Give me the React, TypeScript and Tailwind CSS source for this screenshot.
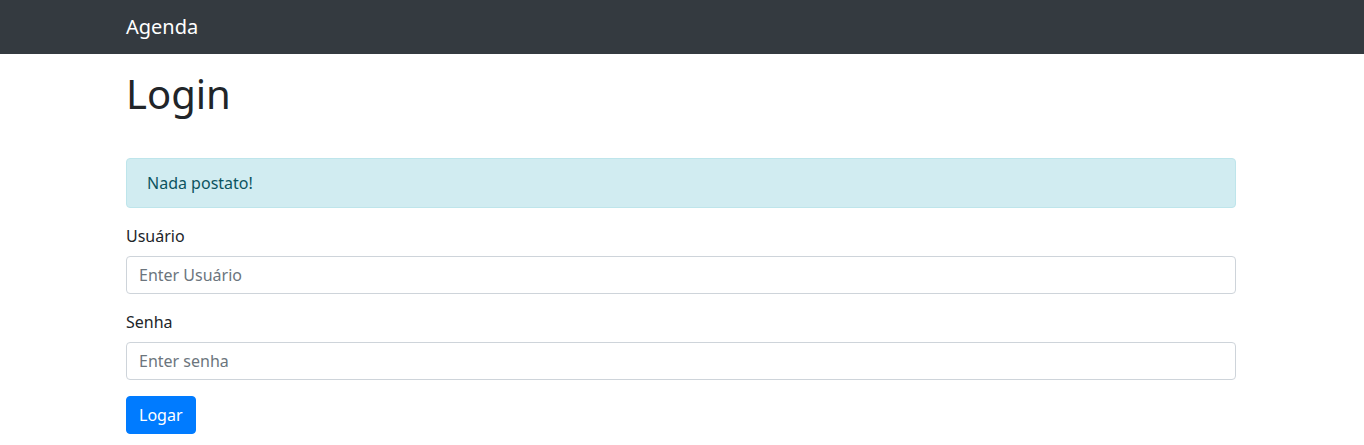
import { useState, FormEvent } from 'react'

export default function App() {
  const [usuario, setUsuario] = useState('')
  const [senha, setSenha] = useState('')

  const handleSubmit = (e: FormEvent) => {
    e.preventDefault()
  }

  return (
    <div className="min-h-screen bg-white text-[#212529] font-['Noto_Sans',sans-serif] text-base leading-6">
      <nav className="h-[54px] bg-[#343a40] flex justify-center pr-[2px]">
        <div className="w-[1110px] flex items-center">
          <a href="#" className="text-white text-xl leading-[30px]">
            Agenda
          </a>
        </div>
      </nav>

      <div className="flex justify-center pr-[2px]">
        <div className="w-[1110px]">
          <h1 className="mt-4 mb-10 text-[40px] leading-[48px] font-normal">Login</h1>

          <div className="mb-4 px-5 py-3 bg-[#d1ecf1] border border-[#bee5eb] text-[#0c5460] rounded">
            Nada postato!
          </div>

          <form onSubmit={handleSubmit}>
            <div className="mb-4">
              <label htmlFor="usuario" className="block mb-2">
                Usuário
              </label>
              <input
                id="usuario"
                type="text"
                value={usuario}
                onChange={(e) => setUsuario(e.target.value)}
                placeholder="Enter Usuário"
                className="block w-full h-[38px] px-3 py-1.5 border border-[#ced4da] rounded text-[#495057] placeholder:text-[#6c757d] outline-none"
              />
            </div>

            <div className="mb-4">
              <label htmlFor="senha" className="block mb-2">
                Senha
              </label>
              <input
                id="senha"
                type="password"
                value={senha}
                onChange={(e) => setSenha(e.target.value)}
                placeholder="Enter senha"
                className="block w-full h-[38px] px-3 py-1.5 border border-[#ced4da] rounded text-[#495057] placeholder:text-[#6c757d] outline-none"
              />
            </div>

            <button
              type="submit"
              className="h-[38px] px-3 bg-[#007bff] border border-[#007bff] text-white rounded"
            >
              Logar
            </button>
          </form>
        </div>
      </div>
    </div>
  )
}
